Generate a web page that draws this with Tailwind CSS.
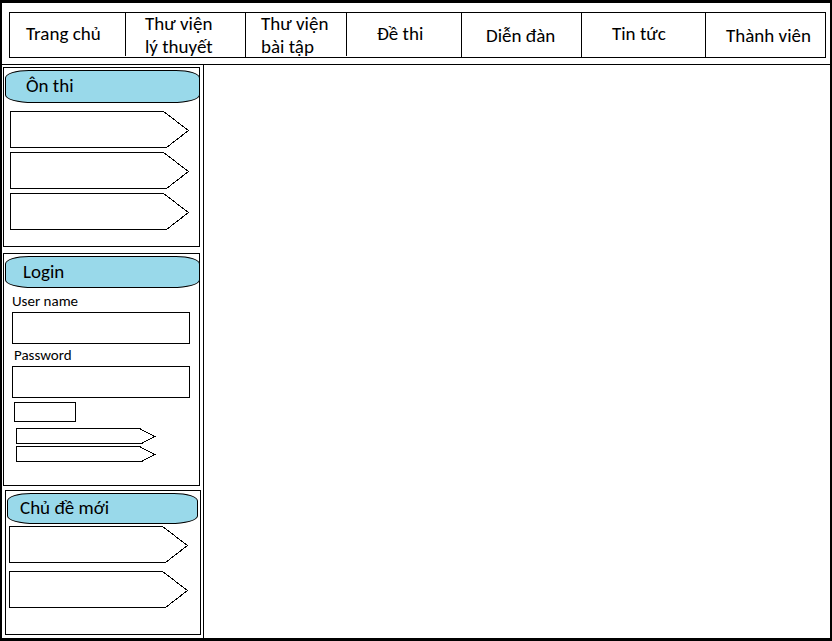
<!DOCTYPE html>
<html lang="vi">
<head>
<meta charset="utf-8">
<meta name="viewport" content="width=device-width, initial-scale=1">
<title>Trang chủ</title>
<script src="https://cdn.jsdelivr.net/npm/@tailwindcss/browser@4"></script>
</head>
<body class="flex min-h-screen flex-col border-x-2 border-y-3 border-black bg-white font-[Carlito,Lato,'Open_Sans',sans-serif] text-[19px] leading-[23px] text-black">
<!-- Shared arrow outlines -->
<svg class="hidden" aria-hidden="true">
  <symbol id="arrow-lg" viewBox="0 0 180 37"><path d="M.5 .5H153.5L178.5 19.5L156.5 36.5H.5Z" fill="none" stroke="currentColor" shape-rendering="crispEdges"/></symbol>
  <symbol id="arrow-sm" viewBox="0 0 140 16"><path d="M.5 .5H123.5L138.5 8.5L125.5 15.5H.5Z" fill="none" stroke="currentColor" shape-rendering="crispEdges"/></symbol>
</svg>
<header class="border-b border-black pt-[9px] pr-1 pb-1.5 pl-[7px]">
  <nav class="grid h-[46px] grid-cols-[115fr_120fr_101fr_115fr_120fr_124fr_120fr] grid-rows-1 border border-black">
    <a href="#" class="flex items-center pb-1 pl-4">Trang chủ</a>
    <a href="#" class="mb-px flex items-center border-l border-black pl-[19px]">Thư viện<br>lý thuyết</a>
    <a href="#" class="flex items-center border-l border-black pl-[15px]">Thư viện<br>bài tập</a>
    <a href="#" class="mb-px flex items-center border-l border-black pb-0.5 pl-[30px]">Đề thi</a>
    <a href="#" class="flex items-center border-l border-black pl-6">Diễn đàn</a>
    <a href="#" class="flex items-center border-l border-black pb-1 pl-[30px]">Tin tức</a>
    <a href="#" class="flex items-center border-l border-black pl-5">Thành viên</a>
  </nav>
</header>
<div class="flex flex-1">
  <aside class="w-[202px] shrink-0 border-r border-black pt-0.5 pb-[3px]">
    <section class="mr-[3px] ml-px border border-black pt-0.5 pb-4">
      <h2 class="ml-px -mr-px flex h-[33px] items-center rounded-[24px_24px_28px_28px/8px] border border-black bg-[#99d9ea] pb-0.5 pl-5">Ôn thi</h2>
      <ul class="mt-2 ml-1.5 flex flex-col gap-1">
        <li><a href="#" aria-label="Ôn thi 1" class="block"><svg class="h-[37px] w-[180px]"><use href="#arrow-lg"/></svg></a></li>
        <li><a href="#" aria-label="Ôn thi 2" class="block"><svg class="h-[37px] w-[180px]"><use href="#arrow-lg"/></svg></a></li>
        <li><a href="#" aria-label="Ôn thi 3" class="block"><svg class="h-[37px] w-[180px]"><use href="#arrow-lg"/></svg></a></li>
      </ul>
    </section>
    <section class="mt-1.5 mr-[3px] ml-px border border-black pt-0.5 pb-[23px]">
      <h2 class="ml-px -mr-px flex h-8 items-center rounded-[24px_24px_28px_28px/8px] border border-black bg-[#99d9ea] pb-0.5 pl-[17px]">Login</h2>
      <form>
        <label for="user" class="block pt-0.5 pl-2 text-[15px] leading-[22px]">User name</label>
        <input id="user" type="text" class="ml-2 block h-8 w-[178px] border border-black px-2 text-[15px]">
        <label for="pass" class="block pl-2.5 text-[15px] leading-[22px]">Password</label>
        <input id="pass" type="password" class="ml-2 block h-8 w-[178px] border border-black px-2 text-[15px]">
        <button type="submit" aria-label="Login" class="mt-1 ml-2.5 block h-5 w-[62px] border border-black"></button>
      </form>
      <ul class="mt-1.5 ml-3 flex flex-col gap-0.5">
        <li><a href="#" aria-label="Login 1" class="block"><svg class="h-4 w-[140px]"><use href="#arrow-sm"/></svg></a></li>
        <li><a href="#" aria-label="Login 2" class="block"><svg class="h-4 w-[140px]"><use href="#arrow-sm"/></svg></a></li>
      </ul>
    </section>
    <section class="mt-1 mr-0.5 ml-[3px] border border-black px-px pt-0.5 pb-[26px]">
      <h2 class="mr-px flex h-[31px] items-center rounded-[24px_24px_28px_28px/8px] border border-black bg-[#99d9ea] pb-0.5 pl-3">Chủ đề mới</h2>
      <ul class="mt-0.5 ml-0.5 flex flex-col gap-2">
        <li><a href="#" aria-label="Chủ đề mới 1" class="block"><svg class="h-[37px] w-[180px]"><use href="#arrow-lg"/></svg></a></li>
        <li><a href="#" aria-label="Chủ đề mới 2" class="block"><svg class="h-[37px] w-[180px]"><use href="#arrow-lg"/></svg></a></li>
      </ul>
    </section>
  </aside>
  <main class="flex-1"></main>
</div>
</body>
</html>
